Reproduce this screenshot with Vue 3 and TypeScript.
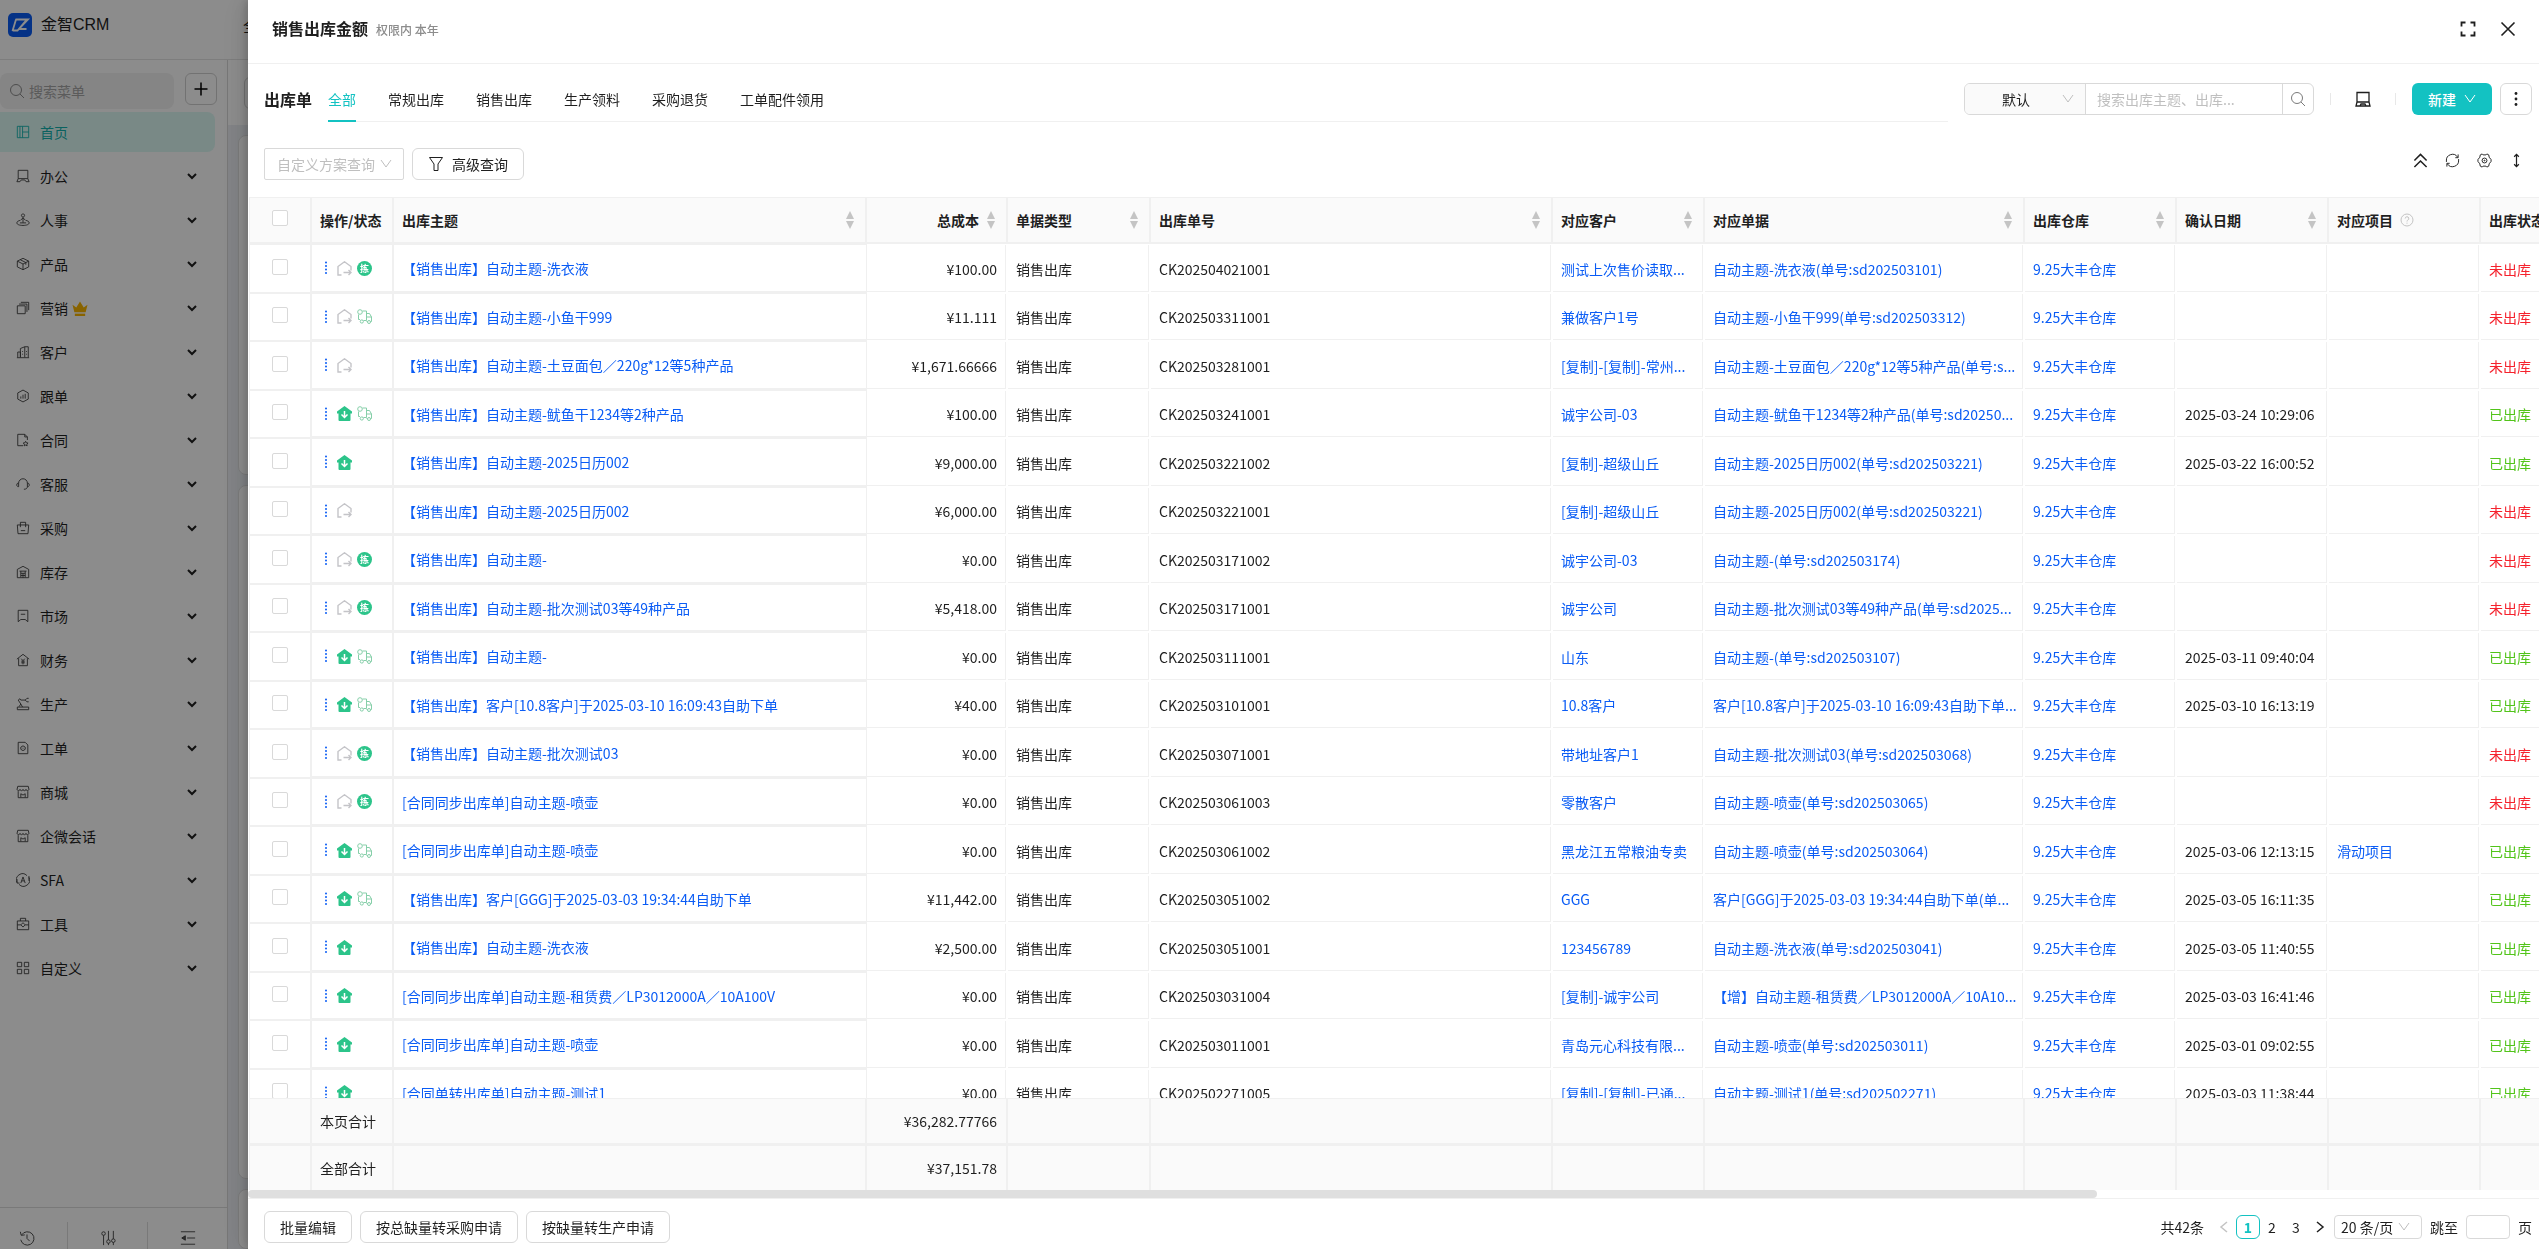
<script setup lang="ts">
import { ref } from 'vue'

interface MenuItem {
  label: string
  icon: string[]
  crown?: boolean
}

interface Order {
  out: boolean
  extra: '' | 'pick' | 'truck'
  title: string
  cost: string
  no: string
  customer: string
  source: string
  date: string
  project?: string
}

const shopIcon = [
  'M2 1.5h12l.8 3.5c0 1.5-3.2 2-3.4 0-.2 2-3.2 2-3.4 0-.2 2-3.2 2-3.4 0-.2 2-3.4 1.5-3.4 0z',
  'M2.5 7v7.5h11V7',
  'M5.500 14V10L8 11.5l2.500-1.500v4',
]

const menu: MenuItem[] = [
  { label: '首页', icon: ['M1.500 1.500h13v13h-13z', 'M7.500 1.500v13', 'M4.500 1.500v13', 'M7.500 8h7'] },
  { label: '办公', icon: ['M2.500 1.500h11v9.500h-11z', 'M2.500 11L1 14.500h3.500l1.500-2h4l1.500 2H15L13.500 11'] },
  { label: '人事', icon: ['M8 1a1.800 1.800 0 1 0 .01 0', 'M8 5v6', 'M5 8.500L8 5.500l3 3', 'M4.500 8.500C2.500 9 1 9.800 1 11.200c0 2 3 3 7 3s7-1 7-3c0-1.400-1.500-2.200-3.500-2.700', 'M4.500 11.300h7'] },
  { label: '产品', icon: ['M8 1.500l6.500 3.200v6.600L8 14.500l-6.500-3.200V4.700z', 'M1.500 4.700L8 8l6.500-3.300', 'M8 8v6.500', 'M4.800 3.100l6.400 3.200v2.500'] },
  { label: '营销', icon: ['M1.500 5.500h9v9h-9z', 'M3.500 3.500h9v9', 'M5.500 1.500h9v9'], crown: true },
  { label: '客户', icon: ['M1 14.500h14', 'M2 14V8h3v6', 'M5 14V4l5-2v12', 'M10 2h4v12', 'M7.500 7v1M7.500 10v1M12 7v1M12 10v1'] },
  { label: '跟单', icon: ['M8 1.200l6 3.300v7L8 14.800l-6-3.300v-7z', 'M5.500 8.500V11M8 6.500V11M10.500 5.500V11'] },
  { label: '合同', icon: ['M8 14.500H2v-13h8l3 3V8', 'M10 1.500v3h3', 'M11 9.500l.9 1.700 1.900.3-1.400 1.300.3 1.900-1.700-.9-1.700.9.3-1.900-1.400-1.300 1.900-.3z'] },
  { label: '客服', icon: ['M3 11V7a5 5 0 0 1 10 0v4', 'M3 7H2L1 8v2l1 1h1', 'M13 7h1l1 1v2l-1 1h-1', 'M13 11c0 2-1.500 3-4 3'] },
  { label: '采购', icon: ['M1.500 4.500h13l-.8 10H2.300z', 'M5 7V1.500h6V7', 'M5.500 11h5'] },
  { label: '库存', icon: ['M1.500 5L8 1.500 14.500 5v9.500h-13z', 'M4 7h8', 'M5.500 7v7M10.500 7v7', 'M5.500 9.500h5M5.500 12h5M8 9.500v5'] },
  { label: '市场', icon: ['M2.500 1.500h11v13l-3-2.500h-5l-3 2.500z', 'M5.500 6h5'] },
  { label: '财务', icon: ['M1 7l7-5.500L15 7', 'M3 6v8.500h10V6', 'M6 6.500l2 2.300 2-2.300', 'M8 9v4M6 9.300h4M6 11.200h4'] },
  { label: '生产', icon: ['M1.500 11.500h13v3h-13z', 'M3.500 11l2-3-3-4.500 2-1.500 1 1.500h5', 'M10.500 3.500l2-2h2M10.500 3.500l2 2h2', 'M5.500 8l2 3.500'] },
  { label: '工单', icon: ['M2.500 1.500h8l3 3v10h-11z', 'M8 5.500l2.500 1.500v2.500L8 11 5.500 9.500V7z', 'M8 7.700v1'] },
  { label: '商城', icon: shopIcon },
  { label: '企微会话', icon: shopIcon },
  { label: 'SFA', icon: ['M1.200 11A7 7 0 0 1 12.500 3', 'M14.800 5A7 7 0 0 1 3.500 13', 'M1.200 7v4.500H4', 'M14.800 9V3.500', 'M5.500 11.500L8 4.500l2.500 7M6.500 9h3'] },
  { label: '工具', icon: ['M1.500 4.500h13v10h-13z', 'M5 4.500v-3h6v3', 'M1.500 9h4M10.500 9h4', 'M8 6.500L10.500 9 8 11.500 5.500 9z'] },
  { label: '自定义', icon: ['M1.500 1.500h5v5h-5z', 'M9.500 1.500h5v5h-5z', 'M1.500 9.500h5v5h-5z', 'M9.500 9.500h5v5h-5z'] },
]

const tabs = ['全部', '常规出库', '销售出库', '生产领料', '采购退货', '工单配件领用']
const activeTab = ref('全部')

const columns = [
  { label: '操作/状态', width: 82, sort: false },
  { label: '出库主题', width: 473, sort: true },
  { label: '总成本', width: 141, sort: true, right: true },
  { label: '单据类型', width: 143, sort: true },
  { label: '出库单号', width: 402, sort: true },
  { label: '对应客户', width: 152, sort: true },
  { label: '对应单据', width: 320, sort: true },
  { label: '出库仓库', width: 152, sort: true },
  { label: '确认日期', width: 152, sort: true },
  { label: '对应项目', width: 152, sort: false, help: true },
  { label: '出库状态', width: 152, sort: false },
]

const orders: Order[] = [
  { out: false, extra: 'pick', title: '【销售出库】自动主题-洗衣液', cost: '¥100.00', no: 'CK202504021001', customer: '测试上次售价读取...', source: '自动主题-洗衣液(单号:sd202503101)', date: '' },
  { out: false, extra: 'truck', title: '【销售出库】自动主题-小鱼干999', cost: '¥11.111', no: 'CK202503311001', customer: '兼做客户1号', source: '自动主题-小鱼干999(单号:sd202503312)', date: '' },
  { out: false, extra: '', title: '【销售出库】自动主题-土豆面包／220g*12等5种产品', cost: '¥1,671.66666', no: 'CK202503281001', customer: '[复制]-[复制]-常州...', source: '自动主题-土豆面包／220g*12等5种产品(单号:s...', date: '' },
  { out: true, extra: 'truck', title: '【销售出库】自动主题-鱿鱼干1234等2种产品', cost: '¥100.00', no: 'CK202503241001', customer: '诚宇公司-03', source: '自动主题-鱿鱼干1234等2种产品(单号:sd20250...', date: '2025-03-24 10:29:06' },
  { out: true, extra: '', title: '【销售出库】自动主题-2025日历002', cost: '¥9,000.00', no: 'CK202503221002', customer: '[复制]-超级山丘', source: '自动主题-2025日历002(单号:sd202503221)', date: '2025-03-22 16:00:52' },
  { out: false, extra: '', title: '【销售出库】自动主题-2025日历002', cost: '¥6,000.00', no: 'CK202503221001', customer: '[复制]-超级山丘', source: '自动主题-2025日历002(单号:sd202503221)', date: '' },
  { out: false, extra: 'pick', title: '【销售出库】自动主题-', cost: '¥0.00', no: 'CK202503171002', customer: '诚宇公司-03', source: '自动主题-(单号:sd202503174)', date: '' },
  { out: false, extra: 'pick', title: '【销售出库】自动主题-批次测试03等49种产品', cost: '¥5,418.00', no: 'CK202503171001', customer: '诚宇公司', source: '自动主题-批次测试03等49种产品(单号:sd2025...', date: '' },
  { out: true, extra: 'truck', title: '【销售出库】自动主题-', cost: '¥0.00', no: 'CK202503111001', customer: '山东', source: '自动主题-(单号:sd202503107)', date: '2025-03-11 09:40:04' },
  { out: true, extra: 'truck', title: '【销售出库】客户[10.8客户]于2025-03-10 16:09:43自助下单', cost: '¥40.00', no: 'CK202503101001', customer: '10.8客户', source: '客户[10.8客户]于2025-03-10 16:09:43自助下单...', date: '2025-03-10 16:13:19' },
  { out: false, extra: 'pick', title: '【销售出库】自动主题-批次测试03', cost: '¥0.00', no: 'CK202503071001', customer: '带地址客户1', source: '自动主题-批次测试03(单号:sd202503068)', date: '' },
  { out: false, extra: 'pick', title: '[合同同步出库单]自动主题-喷壶', cost: '¥0.00', no: 'CK202503061003', customer: '零散客户', source: '自动主题-喷壶(单号:sd202503065)', date: '' },
  { out: true, extra: 'truck', title: '[合同同步出库单]自动主题-喷壶', cost: '¥0.00', no: 'CK202503061002', customer: '黑龙江五常粮油专卖', source: '自动主题-喷壶(单号:sd202503064)', date: '2025-03-06 12:13:15', project: '滑动项目' },
  { out: true, extra: 'truck', title: '【销售出库】客户[GGG]于2025-03-03 19:34:44自助下单', cost: '¥11,442.00', no: 'CK202503051002', customer: 'GGG', source: '客户[GGG]于2025-03-03 19:34:44自助下单(单...', date: '2025-03-05 16:11:35' },
  { out: true, extra: '', title: '【销售出库】自动主题-洗衣液', cost: '¥2,500.00', no: 'CK202503051001', customer: '123456789', source: '自动主题-洗衣液(单号:sd202503041)', date: '2025-03-05 11:40:55' },
  { out: true, extra: '', title: '[合同同步出库单]自动主题-租赁费／LP3012000A／10A100V', cost: '¥0.00', no: 'CK202503031004', customer: '[复制]-诚宇公司', source: '【增】自动主题-租赁费／LP3012000A／10A10...', date: '2025-03-03 16:41:46' },
  { out: true, extra: '', title: '[合同同步出库单]自动主题-喷壶', cost: '¥0.00', no: 'CK202503011001', customer: '青岛元心科技有限...', source: '自动主题-喷壶(单号:sd202503011)', date: '2025-03-01 09:02:55' },
  { out: true, extra: '', title: '[合同单转出库单]自动主题-测试1', cost: '¥0.00', no: 'CK202502271005', customer: '[复制]-[复制]-已通...', source: '自动主题-测试1(单号:sd202502271)', date: '2025-03-03 11:38:44' },
]

const totals = [
  { label: '本页合计', cost: '¥36,282.77766' },
  { label: '全部合计', cost: '¥37,151.78' },
]

const page = ref(1)
</script>

<template>
  <div class="page">
    <header class="topbar">
      <svg class="logo" viewBox="0 0 24 24">
        <rect width="24" height="24" rx="5" fill="#0a5cf5" />
        <path d="M7.500 6.500H20L11 16h7.500M4.500 18L8 6.500M4.500 17.500h5L18 7.500" fill="none" stroke="#fff" stroke-width="1.800" />
      </svg>
      <span class="brand">金智CRM</span>
      <span class="crumb">全部</span>
    </header>
    <div class="main">
      <aside class="sidebar">
        <div class="menu-search">
          <label class="menu-box">
            <svg viewBox="0 0 16 16" class="line"><circle cx="7" cy="7" r="5.5" /><path d="M11 11l4 4" /></svg>
            <input type="text" placeholder="搜索菜单" aria-label="搜索菜单" />
          </label>
          <button class="plus" aria-label="新增"><svg viewBox="0 0 16 16"><path d="M8 1.500v13M1.500 8h13" /></svg></button>
        </div>
        <nav class="menu">
          <a v-for="(m, i) in menu" :key="m.label" href="#" class="menu-item" :class="{ active: i === 0 }">
            <svg viewBox="0 0 16 16" class="line menu-icon"><path v-for="d in m.icon" :key="d" :d="d" /></svg>
            <span>{{ m.label }}</span>
            <svg v-if="m.crown" class="crown" viewBox="0 0 16 16">
              <path d="M0 4l4 3 4-6.500L12 7l4-3-2 8H2z" fill="#f7b500" /><path d="M2.500 13.500h11V16h-11z" fill="#f7b500" />
            </svg>
            <svg v-if="i > 0" class="caret" viewBox="0 0 10 10"><path d="M1 3l4 4 4-4" /></svg>
          </a>
        </nav>
        <footer class="side-foot">
          <button aria-label="历史"><svg viewBox="0 0 18 18" class="line"><path d="M3 5.500A7.500 7.500 0 1 1 2 11M1.500 2l1 4 4-.5M9 5v4.500l3 3" /></svg></button>
          <button aria-label="设置"><svg viewBox="0 0 18 18" class="line"><path d="M4 6v11M9.500 1v10M15 1v9M9.500 15v2M15 14v3" /><circle cx="4" cy="4" r="2" /><circle cx="9.500" cy="13" r="2" /><circle cx="15" cy="12" r="2" /></svg></button>
          <button aria-label="收起"><svg viewBox="0 0 18 18" class="line"><path d="M1 2h16M8 9h9M1 16h16" /><path d="M6 6.500L2 9l4 2.500z" fill="#555" /></svg></button>
        </footer>
      </aside>
      <section class="board">
        <div class="board-bar"><span></span></div>
        <div class="cards"><div class="card short"></div><div class="card tall"></div><div class="card"></div></div>
      </section>
    </div>

    <div class="mask"></div>

    <section class="drawer">
      <header class="drawer-head">
        <h1>销售出库金额</h1>
        <small>权限内 本年</small>
        <button class="icon-btn push" aria-label="全屏"><svg viewBox="0 0 16 16"><path d="M1.500 5.500v-4h4M10.500 1.500h4v4M14.500 10.500v4h-4M5.500 14.500h-4v-4" stroke-width="1.800" /></svg></button>
        <button class="icon-btn" aria-label="关闭"><svg viewBox="0 0 16 16"><path d="M1.500 1.500l13 13M14.500 1.500l-13 13" stroke-width="1.600" /></svg></button>
      </header>

      <div class="tab-row">
        <h2>出库单</h2>
        <nav class="tabs">
          <button v-for="t in tabs" :key="t" :class="{ on: t === activeTab }" @click="activeTab = t">{{ t }}</button>
        </nav>
        <div class="actions">
          <form class="search" @submit.prevent>
            <span class="pick">
              <select aria-label="方案"><option>默认</option></select>
              <svg class="down" viewBox="0 0 12 12"><path d="M1 2l5 7 5-7" /></svg>
            </span>
            <input type="text" placeholder="搜索出库主题、出库..." aria-label="搜索" />
            <button aria-label="搜索"><svg viewBox="0 0 16 16"><circle cx="7" cy="7" r="5.500" /><path d="M11 11l4 4" /></svg></button>
          </form>
          <i class="bar"></i>
          <button class="icon-btn laptop" aria-label="大屏"><svg viewBox="0 0 16 16"><path d="M2 1.500h12V11H2zM2 11l-1 4h14l-1-4M5 15l1-2h4l1 2" stroke-width="1.300" /></svg></button>
          <i class="bar"></i>
          <button class="primary">新建<svg viewBox="0 0 12 12"><path d="M1 2l5 7 5-7" /></svg></button>
          <button class="more" aria-label="更多"><svg viewBox="0 0 16 16"><circle cx="8" cy="2.500" r="1.400" /><circle cx="8" cy="8" r="1.400" /><circle cx="8" cy="13.500" r="1.400" /></svg></button>
        </div>
      </div>

      <div class="filter-row">
        <span class="pick plan">
          <select aria-label="自定义方案查询"><option>自定义方案查询</option></select>
          <svg class="down" viewBox="0 0 12 12"><path d="M1 2l5 7 5-7" /></svg>
        </span>
        <button class="btn"><svg viewBox="0 0 16 16"><path d="M1.500 1.500h13L10 8v6.500H6V8z" /></svg>高级查询</button>
        <div class="tools">
          <button class="icon-btn" aria-label="收起"><svg viewBox="0 0 16 16"><path d="M1.500 8L8 1.500 14.500 8M1.500 15L8 8.500l6.500 6.500" stroke-width="1.600" /></svg></button>
          <button class="icon-btn" aria-label="刷新"><svg viewBox="0 0 16 16"><path d="M1.500 9.500v-1a6.500 6.500 0 0 1 12-4M14.500 6.500v1a6.500 6.500 0 0 1-12 4M14 1.500v3.500h-3M2 14.500V11h3" /></svg></button>
          <button class="icon-btn" aria-label="设置"><svg viewBox="0 0 16 16"><path d="M5.500 1l1 1h3l1-1 2 1 .5 2.500L15 7v2l-2 2.500-.5 2.500-2 1-1-1h-3l-1 1-2-1L3 11.500 1 9V7l2-2.500L3.500 2z" /><circle cx="8" cy="8" r="2.600" /><circle cx="8" cy="8" r=".5" /></svg></button>
          <button class="icon-btn" aria-label="行高"><svg viewBox="0 0 16 16"><path d="M8 1.500v13M5.500 4L8 1.500 10.500 4M5.500 12L8 14.500l2.500-2.500" stroke-width="1.300" /></svg></button>
        </div>
      </div>

      <div class="table-wrap">
        <table>
          <colgroup>
            <col class="col-check" />
            <col v-for="c in columns" :key="c.label" :style="{ width: c.width + 'px' }" />
          </colgroup>
          <thead>
            <tr>
              <th class="check"><input type="checkbox" aria-label="全选" /></th>
              <th v-for="c in columns" :key="c.label">
                <div class="th" :class="{ right: c.right }">
                  <span>{{ c.label }}</span>
                  <svg v-if="c.help" class="help" viewBox="0 0 14 14"><circle cx="7" cy="7" r="6" /><path d="M5.200 5.500a1.800 1.800 0 1 1 2.500 1.700c-.5.200-.7.500-.7 1.300M7 9.700v1" /></svg>
                  <svg v-if="c.sort" class="sort" viewBox="0 0 8 18"><path d="M4 0l4 8H0zM4 18L0 10h8z" /></svg>
                </div>
              </th>
            </tr>
          </thead>
          <tbody>
            <tr v-for="o in orders" :key="o.no">
              <td class="fixed check"><input type="checkbox" :aria-label="o.no" /></td>
              <td class="fixed">
                <div class="ops">
                  <svg class="dots" viewBox="0 0 4 14"><circle cx="2" cy="1.500" r="1" /><circle cx="2" cy="5" r="1" /><circle cx="2" cy="8.500" r="1" /><circle cx="2" cy="12" r="1" /></svg>
                  <svg v-if="o.out" viewBox="0 0 15 15"><path d="M7.500 0L15 5.500v2h-1.500V14a1 1 0 0 1-1 1h-10a1 1 0 0 1-1-1V7.500H0v-2z" fill="#2cc48a" /><path d="M7.500 5v6.500M4.500 8.500l3 3 3-3" fill="none" stroke="#fff" stroke-width="1.500" /></svg>
                  <svg v-else viewBox="0 0 15 15"><path d="M4.500 14H1V5.500L7.500.8 14 5.500v4M6.500 11.500h7.500M11.500 9l2.500 2.500-2.500 2.500" fill="none" stroke="#c4c4c8" stroke-width="1.400" /></svg>
                  <span v-if="o.extra === 'pick'" class="pick-tag">拣</span>
                  <svg v-if="o.extra === 'truck'" viewBox="0 0 15 15"><g fill="none" stroke="#86cfa9"><path d="M5.500 2h4v9.500H6.500M1.500 5.500v5H3M9.500 4.500h3L14.500 8v4.500h-1M9.500 8h5M9.500 12.500h1" /><circle cx="3" cy="3" r="2.300" /><circle cx="4.800" cy="12.500" r="1.600" /><circle cx="12" cy="13" r="1.500" /></g></svg>
                </div>
              </td>
              <td class="fixed name"><a href="#">{{ o.title }}</a></td>
              <td class="num">{{ o.cost }}</td>
              <td>销售出库</td>
              <td>{{ o.no }}</td>
              <td><a href="#">{{ o.customer }}</a></td>
              <td><a href="#">{{ o.source }}</a></td>
              <td><a href="#">9.25大丰仓库</a></td>
              <td>{{ o.date }}</td>
              <td><a v-if="o.project" href="#">{{ o.project }}</a></td>
              <td :class="o.out ? 'done' : 'todo'">{{ o.out ? '已出库' : '未出库' }}</td>
            </tr>
          </tbody>
          <tfoot>
            <tr v-for="t in totals" :key="t.label">
              <td></td>
              <td>{{ t.label }}</td>
              <td></td>
              <td class="num">{{ t.cost }}</td>
              <td v-for="n in 8" :key="n"></td>
            </tr>
          </tfoot>
        </table>
      </div>
      <div class="hscroll"><i></i></div>

      <footer class="drawer-foot">
        <button class="btn">批量编辑</button>
        <button class="btn">按总缺量转采购申请</button>
        <button class="btn">按缺量转生产申请</button>
        <nav class="pager">
          <span class="total">共42条</span>
          <button class="arrow off" aria-label="上一页"><svg viewBox="0 0 12 12"><path d="M9 1L3 6l6 5" /></svg></button>
          <button v-for="p in 3" :key="p" class="num-btn" :class="{ on: p === page }" @click="page = p">{{ p }}</button>
          <button class="arrow" aria-label="下一页"><svg viewBox="0 0 12 12"><path d="M3 1l6 5-6 5" /></svg></button>
          <span class="pick size">
            <select aria-label="每页条数"><option>20 条/页</option></select>
            <svg class="down" viewBox="0 0 12 12"><path d="M1 2l5 7 5-7" /></svg>
          </span>
          <label>跳至<input type="text" /></label>
          <span>页</span>
        </nav>
      </footer>
    </section>
  </div>
</template>

<style>
body {
  margin: 0;
  overflow: hidden;
}
</style>

<style scoped>
* {
  box-sizing: border-box;
}
.page {
  height: 100vh;
  display: flex;
  flex-direction: column;
  font: 14px/22px 'Noto Sans CJK SC', sans-serif;
  color: #1f1f1f;
  background: #fff;
}
button,
input,
select {
  font: inherit;
  color: inherit;
  margin: 0;
  outline: 0;
}
button {
  padding: 0;
  border: 0;
  background: none;
  cursor: pointer;
}
a {
  color: #0a5cf5;
  text-decoration: none;
}
svg {
  flex: none;
  display: block;
}
.line {
  fill: none;
  stroke: #3c3c3c;
}
.topbar {
  display: flex;
  align-items: center;
  height: 60px;
  padding: 0 8px 10px;
  border-bottom: 1px solid #e4e4e4;
}
.logo {
  width: 24px;
  height: 24px;
}
.brand {
  width: 202px;
  margin-left: 9px;
  font: 16px/24px 'Liberation Sans', 'Noto Sans CJK SC', sans-serif;
}
.crumb {
  font-size: 16px;
}
.main {
  flex: 1;
  display: flex;
  min-height: 0;
}
.sidebar {
  display: flex;
  flex-direction: column;
  width: 228px;
  border-right: 1px solid #d8d8d8;
}
.menu-search {
  display: flex;
  justify-content: space-between;
  padding: 13px 10px 3px 0;
}
.menu-box {
  display: flex;
  align-items: center;
  gap: 4px;
  width: 174px;
  height: 36px;
  padding-left: 9px;
  border-radius: 8px;
  background: #f2f2f2;
}
.menu-box svg {
  width: 16px;
  height: 16px;
  stroke: #8c8c8c;
}
.menu-box input {
  width: 120px;
  border: 0;
  padding: 0;
  background: none;
}
input::placeholder {
  color: #bfbfbf;
}
.menu-box input::placeholder {
  color: #a6a6a6;
}
.plus {
  display: grid;
  place-items: center;
  width: 32px;
  height: 32px;
  border: 1px solid #d0d0d0;
  border-radius: 6px;
}
.plus svg {
  width: 16px;
  height: 16px;
  stroke: #000;
  stroke-width: 1.5;
}
.menu {
  flex: 1;
  display: flex;
  flex-direction: column;
  gap: 4px;
  padding-right: 12px;
}
.menu-item {
  display: flex;
  align-items: center;
  height: 40px;
  padding: 0 18px 0 16px;
  border-radius: 0 8px 8px 0;
  color: #1f1f1f;
}
.menu-item.active {
  background: #dcfaf5;
  color: #13b3b0;
}
.menu-item.active .line {
  stroke: #13b3b0;
}
.menu-icon {
  width: 14px;
  height: 14px;
  margin-right: 10px;
}
.crown {
  width: 16px;
  height: 15px;
  margin-left: 4px;
}
.caret {
  width: 10px;
  height: 10px;
  margin-left: auto;
  fill: none;
  stroke: #1f1f1f;
  stroke-width: 2;
}
.side-foot {
  display: flex;
  height: 42px;
  padding-top: 14px;
  border-top: 1px solid #dcdcdc;
}
.side-foot button {
  width: 80px;
  padding-top: 4px;
  border-left: 1px solid #dcdcdc;
}
.side-foot button:first-child {
  width: 67px;
  padding-right: 13px;
  border: 0;
}
.side-foot svg {
  width: 16px;
  height: 16px;
  margin: 0 auto;
}
.board {
  flex: 1;
  display: flex;
  flex-direction: column;
  background: #eceff4;
}
.board-bar {
  height: 65px;
  padding: 17px 16px;
  background: #fff;
}
.board-bar span {
  display: block;
  width: 120px;
  height: 32px;
  border: 1px solid #d0d0d0;
  border-radius: 6px;
}
.cards {
  flex: 1;
  display: flex;
  flex-direction: column;
  gap: 10px;
  padding: 10px 10px 0;
}
.card {
  flex: 1;
  border: 1px solid #e0e0e0;
  border-radius: 8px;
  background: #fff;
}
.card.short {
  flex: none;
  height: 340px;
}
.card.tall {
  flex: none;
  height: 694px;
}
.mask {
  position: fixed;
  inset: 0;
  background: rgba(0, 0, 0, 0.45);
}
.drawer {
  position: fixed;
  inset: 0 0 0 248px;
  display: flex;
  flex-direction: column;
  background: #fff;
  box-shadow: -6px 0 16px rgba(0, 0, 0, 0.08), -3px 0 6px rgba(0, 0, 0, 0.12), -9px 0 28px rgba(0, 0, 0, 0.05);
}
.drawer svg {
  fill: none;
  stroke: currentColor;
}
.drawer-head {
  display: flex;
  align-items: center;
  height: 64px;
  padding: 0 23px 6px 24px;
  border-bottom: 1px solid #f0f0f0;
}
h1,
h2 {
  margin: 0;
  font-size: 16px;
  line-height: 24px;
  font-weight: 700;
}
h1 {
  margin-bottom: 2px;
}
small {
  margin: 2px 0 0 8px;
  font-size: 12px;
  line-height: 20px;
  font-weight: 500;
  color: #8c8c8c;
}
.icon-btn {
  display: grid;
  place-items: center;
  width: 16px;
  height: 16px;
  color: #1f1f1f;
}
.icon-btn svg {
  width: 16px;
  height: 16px;
}
.icon-btn + .icon-btn {
  margin-left: 24px;
}
.push {
  margin-left: auto;
}
.tab-row {
  display: flex;
  align-items: flex-start;
  padding: 19px 7px 0 16px;
}
h2 {
  line-height: 32px;
}
.tabs {
  flex: 1;
  display: flex;
  gap: 32px;
  height: 39px;
  margin: 0 16px;
  border-bottom: 1px solid #f0f0f0;
}
.tabs button {
  height: 39px;
  padding-bottom: 6px;
  border-bottom: 2px solid transparent;
}
.tabs .on {
  color: #13c2c2;
  border-color: #13c2c2;
}
.actions {
  display: flex;
  align-items: center;
}
.search {
  display: flex;
  width: 350px;
  height: 32px;
  border: 1px solid #d9d9d9;
  border-radius: 6px;
  overflow: hidden;
}
.pick {
  position: relative;
  display: flex;
}
.pick select {
  width: 100%;
  border: 0;
  padding: 0;
  background: none;
  appearance: none;
}
.down {
  position: absolute;
  right: 11px;
  top: 50%;
  width: 12px;
  height: 12px;
  margin-top: -6px;
  color: #bfbfbf;
  pointer-events: none;
}
.search .pick {
  width: 120px;
  background: #fafafa;
}
.search select {
  padding: 0 28px 0 10px;
  text-align-last: center;
}
.search input {
  flex: 1;
  min-width: 0;
  padding: 0 11px;
  border: solid #d9d9d9;
  border-width: 0 1px;
}
.search button {
  display: grid;
  place-items: center;
  width: 30px;
  color: #7a7a7a;
}
.search svg:not(.down) {
  width: 16px;
  height: 16px;
}
.bar {
  width: 1px;
  height: 12px;
  margin: 0 16px;
  background: #e8e8e8;
}
.laptop {
  margin: 0 8px;
}
.primary {
  display: flex;
  align-items: center;
  justify-content: center;
  gap: 8px;
  width: 80px;
  height: 32px;
  border-radius: 6px;
  background: #13c2c2;
  color: #fff;
  font-weight: 500;
}
.primary svg {
  width: 12px;
  height: 12px;
}
.more {
  display: grid;
  place-items: center;
  width: 32px;
  height: 32px;
  margin-left: 8px;
  border: 1px solid #d9d9d9;
  border-radius: 6px;
}
.drawer .more svg {
  width: 16px;
  height: 16px;
  fill: #1f1f1f;
  stroke: none;
}
.filter-row {
  display: flex;
  align-items: center;
  padding: 26px 15px 17px 16px;
}
.plan {
  width: 140px;
  height: 32px;
  margin-right: 8px;
  padding-left: 12px;
  border: 1px solid #d9d9d9;
  border-radius: 2px;
  color: #bfbfbf;
}
.btn {
  display: flex;
  align-items: center;
  gap: 8px;
  height: 32px;
  padding: 0 15px;
  border: 1px solid #d9d9d9;
  border-radius: 6px;
}
.btn svg {
  width: 16px;
  height: 16px;
}
.tools {
  display: flex;
  margin: 0 0 8px auto;
}
.tools svg {
  width: 15px;
  height: 15px;
}
.tools .icon-btn + .icon-btn {
  margin-left: 16px;
}
.table-wrap {
  flex: 1;
  min-height: 0;
  margin-left: 1px;
  overflow: auto;
  scrollbar-width: none;
}
table {
  width: 2384px;
  table-layout: fixed;
  border-collapse: separate;
  border-spacing: 0;
}
.col-check {
  width: 63px;
}
thead {
  position: sticky;
  top: 0;
  z-index: 1;
}
th,
tfoot td {
  height: 47px;
  padding: 0 8px;
  border: solid #f0f0f0;
  border-width: 1px 2px 2px 0;
  background: #fafafa;
  text-align: left;
}
th {
  font-weight: 700;
}
th:first-child,
tfoot td:first-child {
  border-left-width: 1px;
}
.th {
  display: flex;
  align-items: center;
}
.th.right {
  justify-content: flex-end;
}
.sort {
  width: 8px;
  height: 18px;
  margin: 0 3px 0 auto;
}
.th.right .sort {
  margin-left: 8px;
}
.drawer .sort {
  fill: #c4c4c4;
  stroke: none;
}
.help {
  width: 14px;
  height: 14px;
  margin-left: 7px;
  color: #c4c4c4;
}
tbody td {
  height: 48px;
  padding: 0 10px 0 8px;
  white-space: nowrap;
  background: linear-gradient(#f0f0f0, #f0f0f0) left bottom 1px / calc(100% - 2px) 1px no-repeat,
    linear-gradient(#f0f0f0, #f0f0f0) right 2px top 1px / 1px calc(100% - 2px) no-repeat;
}
tbody tr:nth-child(odd) td {
  height: 49px;
}
td.fixed {
  padding-right: 8px;
  border: solid #f0f0f0;
  border-width: 1px 2px 2px 0;
  background: #fff;
}
td.check {
  border-bottom-width: 1px;
  border-left-width: 1px;
}
td.fixed.name {
  border-right: 1px solid #f0f0f0;
}
th.check,
td.fixed.check {
  padding: 0 0 4px;
}
input[type='checkbox'] {
  display: block;
  width: 16px;
  height: 16px;
  margin: 0 auto;
  appearance: none;
  border: 1px solid #d9d9d9;
  border-radius: 2px;
  background: #fff;
}
.num {
  text-align: right;
}
tbody .num,
tfoot .num {
  padding-right: 11px;
}
tfoot .num {
  padding-right: 9px;
}
.ops {
  display: flex;
  align-items: center;
  padding-left: 4px;
}
.ops svg,
.pick-tag {
  width: 15px;
  height: 15px;
  margin-right: 5px;
}
.drawer .ops svg {
  stroke: none;
}
.drawer .ops .dots {
  width: 4px;
  height: 14px;
  margin-right: 9px;
  fill: #0a5cf5;
}
.pick-tag {
  border-radius: 50%;
  background: #2cc48a;
  color: #fff;
  font-size: 9px;
  line-height: 15px;
  text-align: center;
  font-weight: 700;
}
.todo {
  color: #f5222d;
}
.done {
  color: #52c41a;
}
tfoot {
  position: sticky;
  bottom: 0;
  z-index: 1;
}
tfoot tr:last-child td {
  height: 45px;
  border-bottom-width: 0;
}
.hscroll {
  border-bottom: 1px solid #f0f0f0;
}
.hscroll i {
  display: block;
  width: 80.7%;
  height: 8px;
  border-radius: 4px;
  background: #dfdfdf;
}
.drawer-foot {
  display: flex;
  align-items: center;
  gap: 8px;
  padding: 12px 7px 6px 16px;
}
.pager {
  display: flex;
  align-items: center;
  margin-left: auto;
}
.total {
  margin-right: 8px;
}
.arrow,
.num-btn {
  display: grid;
  place-items: center;
  width: 24px;
  height: 24px;
}
.arrow svg {
  width: 12px;
  height: 12px;
  stroke-width: 1.5;
}
.off {
  color: #c4c4c4;
}
.num-btn.on {
  border: 1px solid #13c2c2;
  border-radius: 6px;
  color: #13c2c2;
  font-weight: 700;
}
.size {
  width: 88px;
  height: 24px;
  margin: 0 8px 0 2px;
  padding-left: 6px;
  border: 1px solid #d9d9d9;
  border-radius: 4px;
}
.pager input {
  width: 44px;
  height: 24px;
  margin: 0 8px;
  border: 1px solid #d9d9d9;
  border-radius: 4px;
}
.pager label {
  display: flex;
  align-items: center;
}
</style>
